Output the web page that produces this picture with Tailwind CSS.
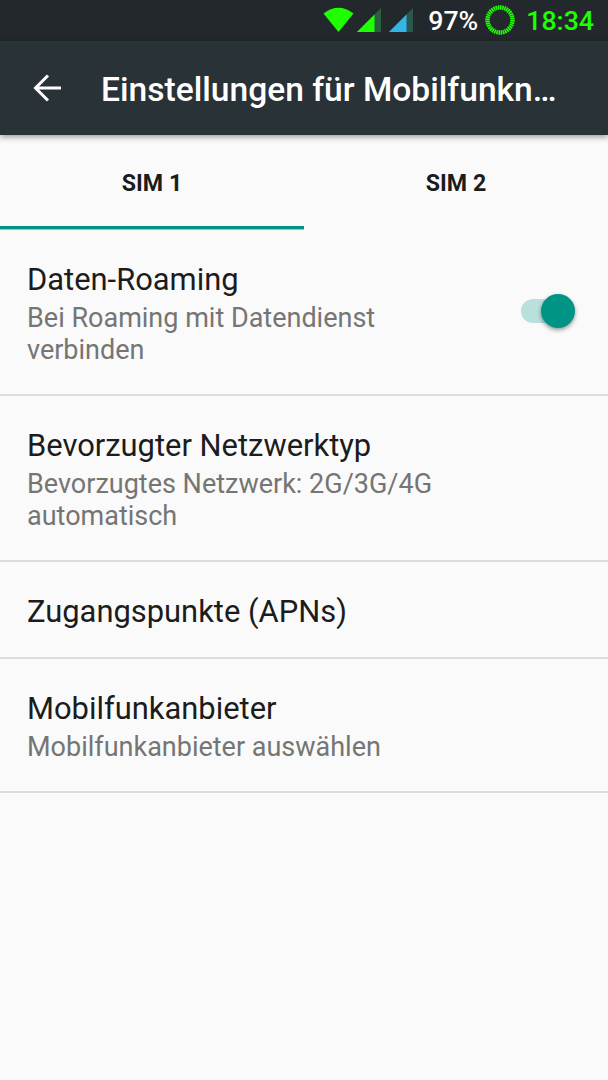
<!DOCTYPE html>
<html lang="de">

<head>
    <meta charset="UTF-8">
    <meta name="viewport" content="width=device-width, initial-scale=1.0">
    <title>Einstellungen für Mobilfunknetze</title>
    <script src="https://cdn.jsdelivr.net/npm/@tailwindcss/browser@4"></script>
</head>

<body class="bg-[#fafafa] font-['Roboto',sans-serif] text-[#1c1c1c]">
    <div class="w-[608px] h-[1080px] overflow-hidden flex flex-col">
        <!-- Status bar -->
        <div class="h-[41px] shrink-0 bg-[#22282b] flex items-center justify-end pr-[14px] font-medium text-[26.700px] leading-none text-white">
            <svg class="w-[32px] h-[41px]" viewBox="0 0 32 41">
                <path d="M0.500 13.500Q15.500 2 30.500 13.500L15.500 32Z" fill="#1eff00" />
            </svg>
            <svg class="w-[24px] h-[41px] ml-[2px]" viewBox="0 0 24 41">
                <path d="M24 8V32H0Z" fill="#28603f" />
                <path d="M17.500 14.500V32H0Z" fill="#1eff00" />
            </svg>
            <svg class="w-[24px] h-[41px] ml-[8px]" viewBox="0 0 24 41">
                <path d="M24 8V32H0Z" fill="#2c5650" />
                <path d="M17.500 14.500V32H0Z" fill="#33b5e5" />
            </svg>
            <span class="ml-[15px] pt-[2px]">97%</span>
            <svg class="w-[30px] h-[41px] ml-[7px]" viewBox="0 0 30 41">
                <circle cx="15" cy="20" r="12.500" fill="none" stroke="#1d5a22" stroke-width="4" />
                <circle cx="15" cy="20" r="12.500" fill="none" stroke="#1eff00" stroke-width="4.400" pathLength="108" stroke-dasharray="2 1" />
            </svg>
            <span class="ml-[11px] pt-[2px] text-[#1eff00]">18:34</span>
        </div>

        <!-- Toolbar -->
        <header class="relative h-[94px] shrink-0 bg-[#283237] flex items-center pl-[33px] text-white shadow-[0_2px_6px_rgba(0,0,0,0.4)]">
            <svg class="w-[28px] h-[28px] shrink-0" viewBox="0 0 28 28" fill="none" stroke="#fff" stroke-width="3">
                <path d="M28 14H3.500M15 1.500L2.500 14L15 26.500" />
            </svg>
            <h1 class="ml-[40px] pt-[4px] font-medium text-[33.600px] leading-[40px] whitespace-nowrap">Einstellungen für Mobilfunkn…</h1>
        </header>

        <!-- Tabs -->
        <nav class="h-[95px] shrink-0 grid grid-cols-2 items-start text-center font-bold text-[23.200px] leading-[85px]">
            <div class="pt-[6px] border-b-3 border-[#009485] shadow-[0_1px_0_#8fd0c9]">SIM 1</div>
            <div class="pt-[6px]">SIM 2</div>
        </nav>

        <!-- Preferences -->
        <main class="text-[27px] leading-[32px] text-[#757575]">
            <section class="h-[166px] border-b-2 border-[#dcdcdc] pl-[27px] pr-[33px] flex items-center justify-between">
                <div class="w-[440px] pt-[2px]">
                    <h2 class="mb-[3px] text-[30.900px] leading-[38px] text-[#1c1c1c]">Daten-Roaming</h2>
                    <p>Bei Roaming mit Datendienst<br>verbinden</p>
                </div>
                <div class="w-[54px] h-[24px] mb-[2px] rounded-full bg-[#b9e0dc] flex items-center justify-end">
                    <div class="w-[34px] h-[34px] rounded-full bg-[#009485] shrink-0 shadow-[0_2px_4px_rgba(0,0,0,0.4)]"></div>
                </div>
            </section>
            <section class="h-[166px] border-b-2 border-[#dcdcdc] px-[27px] pt-[3px] flex flex-col justify-center">
                <h2 class="mb-[3px] text-[30.900px] leading-[38px] text-[#1c1c1c]">Bevorzugter Netzwerktyp</h2>
                <p>Bevorzugtes Netzwerk: 2G/3G/4G<br>automatisch</p>
            </section>
            <section class="h-[97px] border-b-2 border-[#dcdcdc] px-[27px] pt-[4px] flex flex-col justify-center">
                <h2 class="text-[30.900px] leading-[38px] text-[#1c1c1c]">Zugangspunkte (APNs)</h2>
            </section>
            <section class="h-[134px] border-b-2 border-[#dcdcdc] px-[27px] pt-[3px] flex flex-col justify-center">
                <h2 class="mb-[3px] text-[30.900px] leading-[38px] text-[#1c1c1c]">Mobilfunkanbieter</h2>
                <p>Mobilfunkanbieter auswählen</p>
            </section>
        </main>
    </div>
</body>

</html>
